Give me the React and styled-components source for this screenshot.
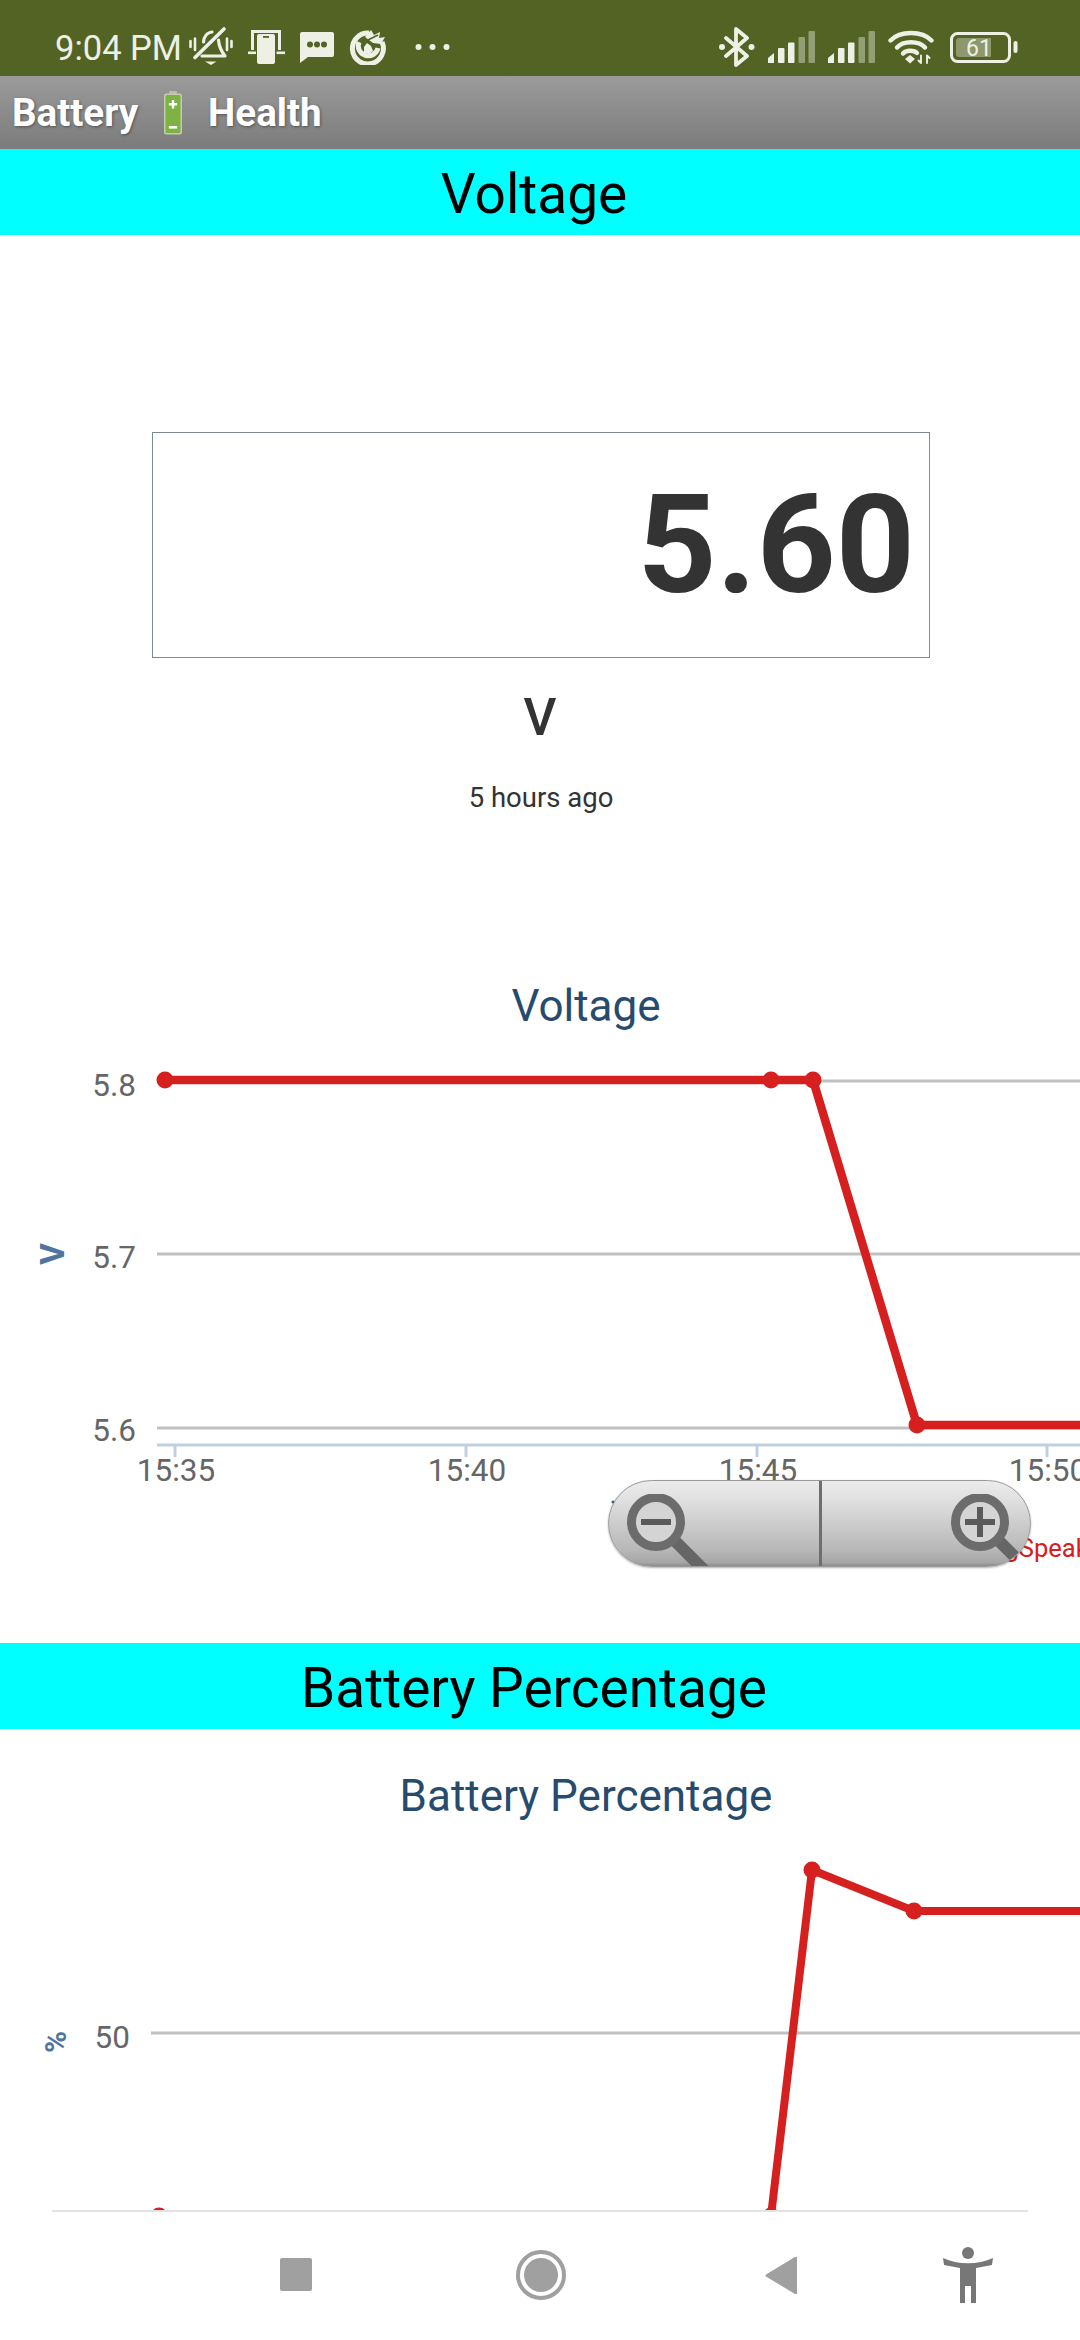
import React from "react";
import styled, { createGlobalStyle } from "styled-components";

const Global = createGlobalStyle`
  html, body { margin: 0; padding: 0; background: #fff; }
  body { font-family: Roboto, "Liberation Sans", sans-serif; }
  * { box-sizing: border-box; }
`;

const Page = styled.div`
  width: 1080px;
  height: 2340px;
  display: flex;
  flex-direction: column;
  overflow: hidden;
  background: #fff;
`;

const StatusBar = styled.div`
  height: 76px;
  flex: none;
  background: #536324;
  color: #eef0e6;
  display: flex;
  align-items: center;
  justify-content: space-between;
  padding: 18px 62px 0 55px;
`;
const StatusGroup = styled.div`
  display: flex;
  align-items: center;
`;
const Clock = styled.span`
  font-size: 34.5px;
  line-height: 40px;
  width: 134px;
  white-space: nowrap;
  position: relative;
  top: 1px;
`;
const StatusIcon = styled.svg`
  display: block;
  flex: none;
  margin-left: ${(p) => p.$gap || 0}px;
`;

const AppBar = styled.div`
  height: 73px;
  flex: none;
  background: linear-gradient(#9b9b9b, #7b7b7b);
  display: flex;
  align-items: center;
  padding-left: 12px;
  color: #fff;
  font-size: 38.6px;
  font-weight: 700;
  text-shadow: 1px 1px 3px rgba(0, 0, 0, 0.4);
`;
const BatteryEmoji = styled.svg`
  display: block;
  margin: 0 26px;
`;

const Banner = styled.div`
  height: 86px;
  flex: none;
  background: #00ffff;
  color: #000;
  font-size: 55px;
  line-height: 90px;
  text-align: center;
  padding-right: 12px;
`;

const GaugeSection = styled.section`
  height: 730px;
  flex: none;
  padding-top: 197px;
  display: flex;
  flex-direction: column;
  align-items: center;
  color: #333;
`;
const ValueBox = styled.div`
  width: 778px;
  height: 226px;
  margin-left: 2px;
  border: 1.5px solid #7b8a94;
  display: flex;
  align-items: center;
  justify-content: flex-end;
  padding-right: 14px;
  font-size: 138px;
  font-weight: 700;
  line-height: 1;
`;
const Unit = styled.div`
  margin-top: 30px;
  font-size: 51px;
  font-weight: 500;
  line-height: 60px;
`;
const Updated = styled.div`
  margin-top: 34px;
  font-size: 27.5px;
  line-height: 32px;
  padding-left: 2px;
`;

const ChartFrame = styled.section`
  position: relative;
  flex: ${(p) => (p.$grow ? "1 1 0" : "none")};
  height: ${(p) => (p.$grow ? "auto" : "678px")};
  overflow: hidden;
`;
const ChartSvg = styled.svg`
  display: block;
  text {
    font-family: Roboto, "Liberation Sans", sans-serif;
  }
`;

const ZoomControl = styled.div`
  position: absolute;
  left: 608px;
  top: 515px;
  width: 423px;
  height: 87px;
  border-radius: 44px;
  border: 1.5px solid #9a9a9a;
  background: linear-gradient(#ececec, #e0e0e0 22%, #b8b8b8 80%, #a6a6a6 96%, #8c8c8c);
  box-shadow: 0 1px 2px rgba(0, 0, 0, 0.3);
  overflow: hidden;
  display: grid;
  grid-template-columns: 213px 1fr;
`;
const ZoomHalf = styled.div`
  display: flex;
  align-items: flex-start;
  padding-top: 13px;
  padding-left: ${(p) => p.$inset}px;
  ${(p) => (p.$divider ? "border-right: 3px solid #6e6e6e;" : "")}
`;

const NavBar = styled.nav`
  position: relative;
  height: 130px;
  flex: none;
  background: #fff;
  display: flex;
  align-items: flex-start;
  padding: 37px 0 0 0;
  &::before {
    content: "";
    position: absolute;
    top: 0;
    left: 52px;
    right: 52px;
    height: 2px;
    background: #e3e3e3;
  }
`;
const NavIcon = styled.svg`
  display: block;
  flex: none;
  margin-left: ${(p) => p.$left}px;
`;

const RED = "#d62020";

function ZoomGlass({ plus }) {
  return (
    <svg width="84" height="72" viewBox="0 0 84 72" style={{ flex: "none" }}>
      <path d="M46 45 L78 77" stroke="#666" strokeWidth="12" fill="none" />
      <circle cx="29" cy="28" r="24.5" fill="#d4d4d4" stroke="#6c6c6c" strokeWidth="9" />
      <rect x="14" y="25" width="30" height="6" fill="#5a5a5a" />
      {plus && <rect x="26" y="13" width="6" height="30" fill="#5a5a5a" />}
    </svg>
  );
}

function VoltageChart() {
  const labels = [
    ["5.8", 1096],
    ["5.7", 1268],
    ["5.6", 1441],
  ];
  const ticks = [
    ["15:35", 175],
    ["15:40", 466],
    ["15:45", 757],
    ["15:50", 1047],
  ];
  const y = (v) => v - 965;
  const points = [[165, 1080], [771, 1080], [813, 1080], [917, 1425]];
  return (
    <ChartSvg width="1080" height="678" viewBox="0 0 1080 678">
      <text x="586" y={y(1021)} textAnchor="middle" fontSize="44" fill="#274b6d">Voltage</text>
      {[1081, 1254, 1428].map((g) => (
        <line key={g} x1="157" x2="1080" y1={y(g)} y2={y(g)} stroke="#c0c0c0" strokeWidth="3" />
      ))}
      <line x1="157" x2="1080" y1={y(1445)} y2={y(1445)} stroke="#c0d0e0" strokeWidth="3" />
      {ticks.map(([t, x]) => (
        <line key={t} x1={x} x2={x} y1={y(1445)} y2={y(1457)} stroke="#c0d0e0" strokeWidth="3" />
      ))}
      {labels.map(([l, b]) => (
        <text key={l} x="136" y={y(b)} textAnchor="end" fontSize="31.5" fill="#666">{l}</text>
      ))}
      {ticks.map(([t, x]) => (
        <text key={t} x={x + 1} y={y(1481)} textAnchor="middle" fontSize="31.5" fill="#666">{t}</text>
      ))}
      <text transform={`translate(64 ${y(1254)}) rotate(-90)`} textAnchor="middle" fontSize="33" fontWeight="700" fill="#4d759e">V</text>
      <polyline points={`165,${y(1080)} 771,${y(1080)} 813,${y(1080)} 917,${y(1425)} 1080,${y(1425)}`} fill="none" stroke={RED} strokeWidth="8.5" strokeLinejoin="round" />
      {points.map(([cx, cy]) => (
        <circle key={cx} cx={cx} cy={y(cy)} r="8.5" fill={RED} />
      ))}
      <text x="955" y={y(1557)} fontSize="25.5" fill={RED}>ThingSpeak</text>
      <circle cx="613" cy={y(1502)} r="1.5" fill="#2f5d8c" />
    </ChartSvg>
  );
}

function PercentChart() {
  const y = (v) => v - 1729;
  const points = [[159, 2216], [771, 2216], [812, 1870], [914, 1911]];
  return (
    <ChartSvg width="1080" height="481" viewBox="0 0 1080 481">
      <text x="586" y={y(1811)} textAnchor="middle" fontSize="44" fill="#274b6d">Battery Percentage</text>
      <line x1="151" x2="1080" y1={y(2033)} y2={y(2033)} stroke="#c0c0c0" strokeWidth="3" />
      <text x="130" y={y(2048)} textAnchor="end" fontSize="31.5" fill="#666">50</text>
      <text transform={`translate(66 ${y(2042)}) rotate(-90)`} textAnchor="middle" fontSize="30" fontWeight="700" fill="#4d759e">%</text>
      <polyline points={`771,${y(2216)} 812,${y(1870)} 914,${y(1911)} 1080,${y(1911)}`} fill="none" stroke={RED} strokeWidth="8" strokeLinejoin="round" />
      {points.map(([cx, cy]) => (
        <circle key={cx} cx={cx} cy={y(cy)} r="8.5" fill={RED} />
      ))}
    </ChartSvg>
  );
}

const Ink = "#eef0e6";
const Bg = "#536324";

export default function App() {
  return (
    <Page>
      <Global />
      <StatusBar>
        <StatusGroup>
          <Clock>9:04 PM</Clock>
          <StatusIcon width="44" height="40" viewBox="0 0 44 40" fill="none" stroke={Ink} strokeWidth="3.2" strokeLinecap="round" strokeLinejoin="round">
            <path d="M14.5 15 C15 10 18 5.5 23 5 M29.5 13 C30 19 32 24 36 29 H13" />
            <path d="M16 34.5 H27.5 L22 38Z" fill={Ink} stroke="none" />
            <path d="M35 2 L6 30.5" strokeWidth="3.6" />
            <path d="M1.5 14 V20 M6 11.5 V23 M38 11.5 V23 M42.5 14 V20" strokeWidth="2.6" />
          </StatusIcon>
          <StatusIcon $gap={15} width="37" height="34" viewBox="0 0 37 34" fill={Ink}>
            <path d="M3 0 H33 V20 H30 V3 H6 V20 H3 Z" />
            <rect x="9" y="4" width="18" height="30" rx="2" />
            <rect x="0" y="21.5" width="8" height="2.6" />
            <rect x="28.5" y="21.5" width="8.5" height="2.6" />
            <rect x="15" y="6" width="6" height="1.8" fill={Bg} />
          </StatusIcon>
          <StatusIcon $gap={15} width="34" height="31" viewBox="0 0 34 31" fill={Ink}>
            <path d="M2 0 H32 Q34 0 34 2 V23 Q34 25 32 25 H8 L0 31 V2 Q0 0 2 0Z" />
            <circle cx="10" cy="12.5" r="3" fill={Bg} />
            <circle cx="17" cy="12.5" r="3" fill={Bg} />
            <circle cx="24" cy="12.5" r="3" fill={Bg} />
          </StatusIcon>
          <StatusIcon $gap={15} width="37" height="36" viewBox="0 0 37 36" fill="none">
            <path d="M20 4 A15.5 15.5 0 1 0 33 13" stroke={Ink} strokeWidth="5" />
            <path d="M10 13 A10 10 0 1 0 29 19" stroke={Ink} strokeWidth="5" />
            <path d="M15 18 L18 14 L22 17 L24 22 L20 25 L15 24Z" fill={Ink} />
            <path d="M16 8 L22 1 L25 6 L31 3 L30 9 L36 8 L32 15 L24 14Z" fill={Ink} />
            <path d="M19 11 L29 6" stroke={Bg} strokeWidth="1.4" />
          </StatusIcon>
          <StatusIcon $gap={29} width="35" height="8" viewBox="0 0 35 8" fill={Ink}>
            <circle cx="3.5" cy="4" r="3" />
            <circle cx="17.5" cy="4" r="3" />
            <circle cx="31.5" cy="4" r="3" />
          </StatusIcon>
        </StatusGroup>
        <StatusGroup>
          <StatusIcon width="36" height="40" viewBox="0 0 36 40" fill="none" stroke={Ink} strokeWidth="3.8" strokeLinecap="round" strokeLinejoin="round">
            <path d="M7 11 L28 29 L17 38 V2 L28 11 L7 29" />
            <circle cx="3" cy="20" r="3" fill={Ink} stroke="none" />
            <circle cx="32.5" cy="20" r="3" fill={Ink} stroke="none" />
          </StatusIcon>
          {[13, 13].map((gap, i) => (
            <StatusIcon key={i} $gap={gap} width="47" height="32" viewBox="0 0 47 32" fill={Ink}>
              <path d="M0 32 V27 L6 22 V32Z" />
              <rect x="10" y="17" width="6.5" height="15" rx="1" />
              <rect x="20" y="11.5" width="6.5" height="20.5" rx="1" />
              <rect x="30.5" y="6" width="6.5" height="26" rx="1" opacity="0.42" />
              <rect x="40.5" y="0" width="6.5" height="32" rx="1" opacity="0.42" />
            </StatusIcon>
          ))}
          <StatusIcon $gap={13} width="46" height="34" viewBox="0 0 46 34" fill="none" stroke={Ink} strokeWidth="4.4" strokeLinecap="round">
            <path d="M2.5 10.5 C12 0.5 34 0.5 43.5 10.5" />
            <path d="M9 17.5 C15 10.5 31 10.5 37 17.5" />
            <path d="M15 23.5 C18 20 26 20 29 23" />
            <path d="M17 29 L22 25 L27 29 L22 33.5Z" fill={Ink} stroke="none" />
            <path d="M33 25.5 V33 M30.5 30.5 L33 33 M39 33 V25.5 M39 25.5 L41.5 28" strokeWidth="1.9" />
          </StatusIcon>
          <StatusIcon $gap={16} width="68" height="31" viewBox="0 0 68 31">
            <rect x="1.5" y="1.5" width="58" height="28" rx="6" fill="none" stroke={Ink} strokeWidth="3" />
            <path d="M9 6 H41 V25 H9 Q6 25 6 22 V9 Q6 6 9 6Z" fill={Ink} opacity="0.38" />
            <text x="29" y="24" textAnchor="middle" fontSize="23" fill={Ink} fontFamily="Roboto, sans-serif">61</text>
            <rect x="63.5" y="9" width="4" height="12" rx="2" fill={Ink} />
          </StatusIcon>
        </StatusGroup>
      </StatusBar>
      <AppBar>
        Battery
        <BatteryEmoji width="18" height="44" viewBox="0 0 18 44">
          <rect x="5" y="0" width="8" height="3" rx="1" fill="#b9c2a8" />
          <rect x="0" y="2.5" width="18" height="41" rx="2.5" fill="#c3cbb4" />
          <rect x="1.5" y="4" width="15" height="38" rx="1.5" fill="#7cb342" />
          <path d="M7.8 9 h2.4 v3 h3 v2.4 h-3 v3 h-2.4 v-3 h-3 v-2.4 h3z" fill="#fff" />
          <rect x="4.8" y="35" width="8.4" height="2.6" fill="#fff" />
        </BatteryEmoji>
        Health
      </AppBar>
      <Banner>Voltage</Banner>
      <GaugeSection>
        <ValueBox>5.60</ValueBox>
        <Unit>V</Unit>
        <Updated>5 hours ago</Updated>
      </GaugeSection>
      <ChartFrame>
        <VoltageChart />
        <ZoomControl>
          <ZoomHalf $inset={18} $divider>
            <ZoomGlass />
          </ZoomHalf>
          <ZoomHalf $inset={129}>
            <ZoomGlass plus />
          </ZoomHalf>
        </ZoomControl>
      </ChartFrame>
      <Banner>Battery Percentage</Banner>
      <ChartFrame $grow>
        <PercentChart />
      </ChartFrame>
      <NavBar>
        <NavIcon $left={280} width="32" height="56" viewBox="0 0 32 56">
          <rect x="0" y="11" width="32" height="33" rx="2" fill="#a0a0a0" />
        </NavIcon>
        <NavIcon $left={204} width="50" height="56" viewBox="0 0 50 56">
          <circle cx="25" cy="28" r="23" fill="none" stroke="#a0a0a0" strokeWidth="4" />
          <circle cx="25" cy="28" r="17" fill="#a0a0a0" />
        </NavIcon>
        <NavIcon $left={199} width="32" height="56" viewBox="0 0 32 56">
          <path d="M32 10 V47 L30 47 L1 29.5 Q0 28.5 1 27.5 L30 10Z" fill="#a0a0a0" />
        </NavIcon>
        <NavIcon $left={146} width="50" height="58" viewBox="0 0 50 58">
          <ellipse cx="25" cy="6" rx="6" ry="6" fill="#777" />
          <path d="M0 11 C15 18 35 18 50 11 L49 18 L33 21 V56 H28 V39 H22 V56 H17 V21 L1 18Z" fill="#777" />
        </NavIcon>
      </NavBar>
    </Page>
  );
}
